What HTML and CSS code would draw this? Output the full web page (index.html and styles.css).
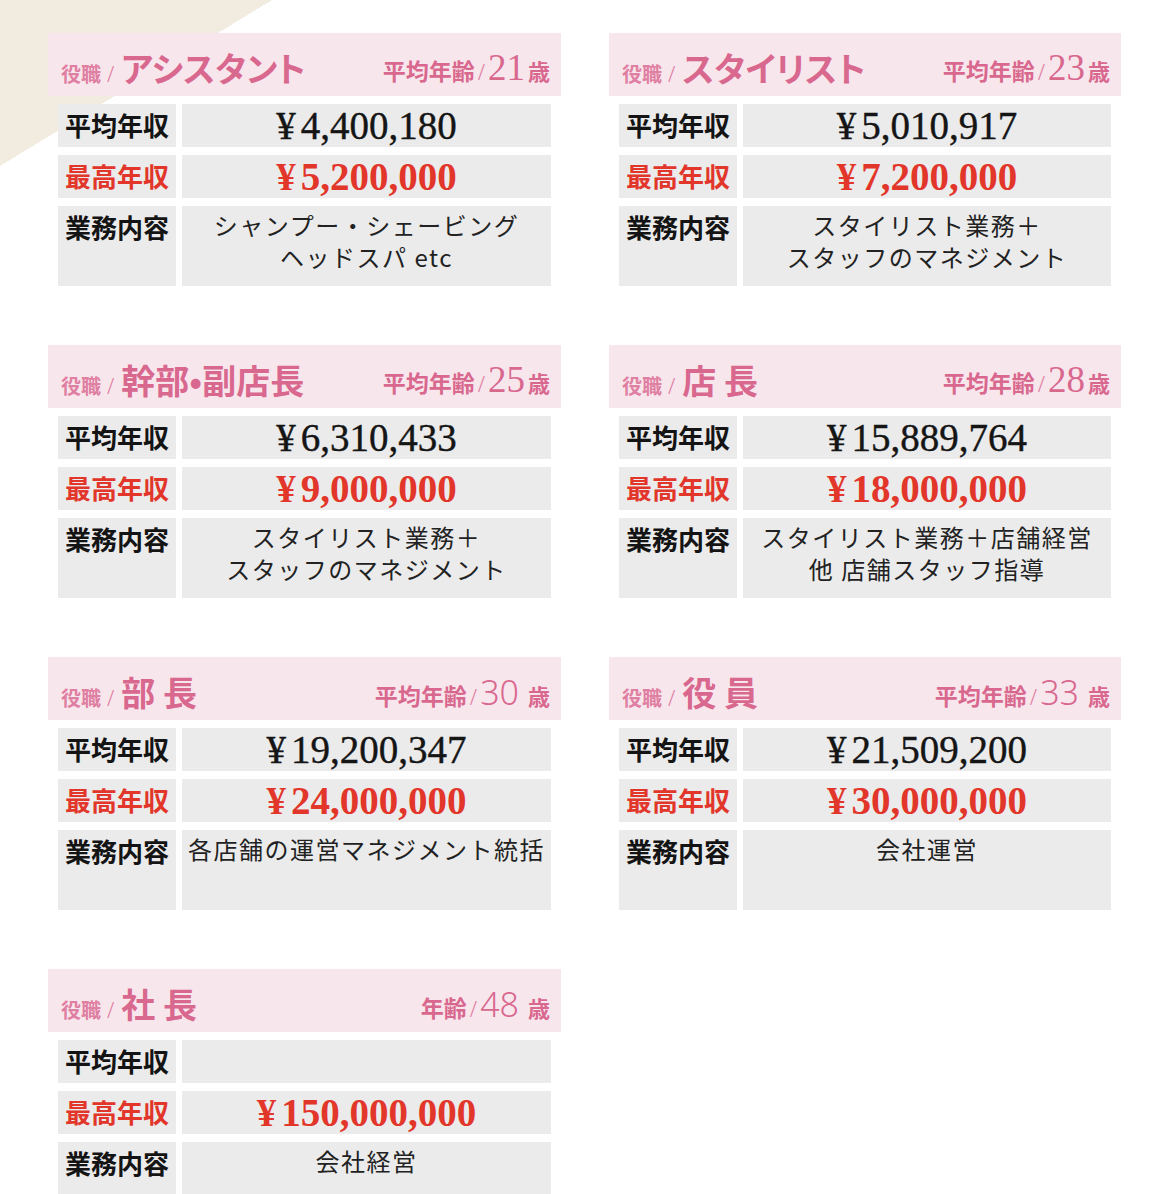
FILE: index.html
```html
<!DOCTYPE html>
<html lang="ja">
<head>
<meta charset="utf-8">
<title>役職別 年収</title>
<link rel="stylesheet" href="styles.css">
</head>
<body>
<div class="page">

  <section class="card">
    <div class="card-head">
      <div class="role"><span class="role-label">役職</span><span class="slash">/</span><span class="role-name">アシスタント</span></div>
      <div class="age"><span class="age-label">平均年齢</span><span class="slash">/</span><span class="age-num">21</span><span class="age-unit">歳</span></div>
    </div>
    <div class="rows">
      <div class="lbl">平均年収</div><div class="val num"><span class="yen">¥</span>4,400,180</div>
      <div class="lbl red">最高年収</div><div class="val num red"><span class="yen">¥</span>5,200,000</div>
      <div class="lbl tall">業務内容</div><div class="val desc">シャンプー・シェービング<br>ヘッドスパ etc</div>
    </div>
  </section>

  <section class="card">
    <div class="card-head">
      <div class="role"><span class="role-label">役職</span><span class="slash">/</span><span class="role-name">スタイリスト</span></div>
      <div class="age"><span class="age-label">平均年齢</span><span class="slash">/</span><span class="age-num">23</span><span class="age-unit">歳</span></div>
    </div>
    <div class="rows">
      <div class="lbl">平均年収</div><div class="val num"><span class="yen">¥</span>5,010,917</div>
      <div class="lbl red">最高年収</div><div class="val num red"><span class="yen">¥</span>7,200,000</div>
      <div class="lbl tall">業務内容</div><div class="val desc">スタイリスト業務＋<br>スタッフのマネジメント</div>
    </div>
  </section>

  <section class="card">
    <div class="card-head">
      <div class="role"><span class="role-label">役職</span><span class="slash">/</span><span class="role-name">幹部•副店長</span></div>
      <div class="age"><span class="age-label">平均年齢</span><span class="slash">/</span><span class="age-num">25</span><span class="age-unit">歳</span></div>
    </div>
    <div class="rows">
      <div class="lbl">平均年収</div><div class="val num"><span class="yen">¥</span>6,310,433</div>
      <div class="lbl red">最高年収</div><div class="val num red"><span class="yen">¥</span>9,000,000</div>
      <div class="lbl tall">業務内容</div><div class="val desc">スタイリスト業務＋<br>スタッフのマネジメント</div>
    </div>
  </section>

  <section class="card">
    <div class="card-head">
      <div class="role"><span class="role-label">役職</span><span class="slash">/</span><span class="role-name">店 長</span></div>
      <div class="age"><span class="age-label">平均年齢</span><span class="slash">/</span><span class="age-num">28</span><span class="age-unit">歳</span></div>
    </div>
    <div class="rows">
      <div class="lbl">平均年収</div><div class="val num"><span class="yen">¥</span>15,889,764</div>
      <div class="lbl red">最高年収</div><div class="val num red"><span class="yen">¥</span>18,000,000</div>
      <div class="lbl tall">業務内容</div><div class="val desc">スタイリスト業務＋店舗経営<br>他 店舗スタッフ指導</div>
    </div>
  </section>

  <section class="card">
    <div class="card-head">
      <div class="role"><span class="role-label">役職</span><span class="slash">/</span><span class="role-name">部 長</span></div>
      <div class="age"><span class="age-label">平均年齢</span><span class="slash">/</span><span class="age-num thin">30</span><span class="age-unit">歳</span></div>
    </div>
    <div class="rows">
      <div class="lbl">平均年収</div><div class="val num"><span class="yen">¥</span>19,200,347</div>
      <div class="lbl red">最高年収</div><div class="val num red"><span class="yen">¥</span>24,000,000</div>
      <div class="lbl tall">業務内容</div><div class="val desc">各店舗の運営マネジメント統括</div>
    </div>
  </section>

  <section class="card">
    <div class="card-head">
      <div class="role"><span class="role-label">役職</span><span class="slash">/</span><span class="role-name">役 員</span></div>
      <div class="age"><span class="age-label">平均年齢</span><span class="slash">/</span><span class="age-num thin">33</span><span class="age-unit">歳</span></div>
    </div>
    <div class="rows">
      <div class="lbl">平均年収</div><div class="val num"><span class="yen">¥</span>21,509,200</div>
      <div class="lbl red">最高年収</div><div class="val num red"><span class="yen">¥</span>30,000,000</div>
      <div class="lbl tall">業務内容</div><div class="val desc">会社運営</div>
    </div>
  </section>

  <section class="card">
    <div class="card-head">
      <div class="role"><span class="role-label">役職</span><span class="slash">/</span><span class="role-name">社 長</span></div>
      <div class="age"><span class="age-label">年齢</span><span class="slash">/</span><span class="age-num thin">48</span><span class="age-unit">歳</span></div>
    </div>
    <div class="rows">
      <div class="lbl">平均年収</div><div class="val num"></div>
      <div class="lbl red">最高年収</div><div class="val num red"><span class="yen">¥</span>150,000,000</div>
      <div class="lbl tall">業務内容</div><div class="val desc">会社経営</div>
    </div>
  </section>

</div>
</body>
</html>
```

FILE: styles.css
```css
* {
  box-sizing: border-box;
}

html, body {
  margin: 0;
  padding: 0;
  background: #ffffff;
}

body {
  font-family: "Noto Sans CJK JP", "Noto Sans", sans-serif;
  color: #1a1a1a;
  background-color: #ffffff;
  background-image: linear-gradient(to bottom right, #f2ebdf 50%, rgba(242, 235, 223, 0) 50%);
  background-size: 272px 166px;
  background-repeat: no-repeat;
  min-height: 1194px;
}

.page {
  display: grid;
  grid-template-columns: 513px 512px;
  column-gap: 48px;
  row-gap: 59px;
  padding: 33px 0 0 48px;
}

.card {
  display: flex;
  flex-direction: column;
}

.card-head {
  height: 63px;
  background: #f8e6ed;
  display: flex;
  justify-content: space-between;
  align-items: flex-end;
  padding: 0 11px 6px 13px;
  color: #d9688f;
  white-space: nowrap;
}

.role, .age {
  display: flex;
  align-items: baseline;
}

.role-label {
  font-size: 20px;
  font-weight: 700;
  color: #df7fa2;
}

.slash {
  font-family: "Noto Sans", sans-serif;
  font-weight: 300;
  font-size: 21px;
  margin: 0 7px 0 6px;
  color: #df7fa2;
}

.role-name {
  font-size: 34px;
  font-weight: 700;
  line-height: 44px;
  font-feature-settings: "palt";
}

.age-label {
  font-size: 23px;
  font-weight: 700;
}

.age .slash {
  margin: 0 3px 0 3px;
}

.age-num {
  font-family: "Liberation Serif", serif;
  font-size: 37px;
  line-height: 44px;
  margin-right: 3px;
}

.age-num.thin {
  font-family: "Noto Sans", sans-serif;
  font-weight: 300;
  font-size: 34px;
  margin-right: 9px;
}

.age-unit {
  font-size: 22px;
  font-weight: 700;
}

.rows {
  display: grid;
  grid-template-columns: 118px 1fr;
  grid-template-rows: 43px 43px 80px;
  column-gap: 6px;
  row-gap: 8px;
  padding: 8px 10px 0 10px;
}

.lbl,
.val {
  background: #ebebeb;
}

.lbl {
  font-size: 26px;
  font-weight: 700;
  color: #141414;
  padding: 0 0 0 7px;
  line-height: 41px;
  white-space: nowrap;
}

.red {
  color: #e2362b;
}

.val.num {
  font-family: "Liberation Serif", serif;
  font-size: 39px;
  line-height: 43px;
  text-align: center;
  color: #151515;
  padding-top: 0;
  -webkit-text-stroke: 0.4px #151515;
}

.val.num.red {
  font-weight: 700;
  color: #e2362b;
  -webkit-text-stroke: 0;
}

.yen {
  margin-right: 5px;
}

.val.desc {
  font-size: 24px;
  line-height: 32px;
  letter-spacing: 1.5px;
  text-align: center;
  padding-top: 3px;
  color: #222;
  white-space: nowrap;
}
```
